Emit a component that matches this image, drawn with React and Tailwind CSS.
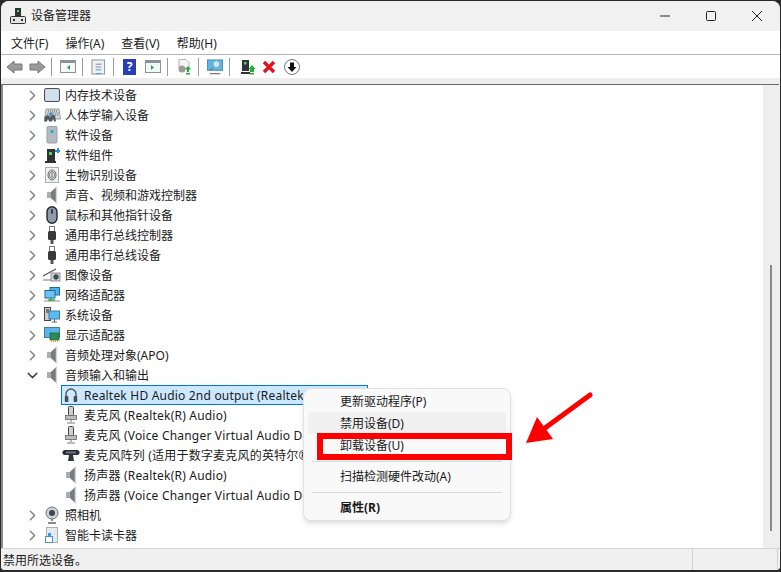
import { ChevronRight, ChevronDown } from 'lucide-react';

const FONT = "font-['Noto_Sans','Noto_Sans_CJK_SC',sans-serif]";

const Speaker = () => (
  <svg width="16" height="18" viewBox="0 0 16 18">
    <path d="M3 6h4l6-5.500v17L7 12H3z" fill="#a9adb0" />
    <path d="M7 6l6-5.500v17L7 12z" fill="#777c80" />
    <path d="M12.500 1v16" stroke="#d5d7d8" strokeWidth="1.500" />
  </svg>
);

const Usb = () => (
  <svg width="16" height="18" viewBox="0 0 16 18">
    <rect x="5.500" y="0.500" width="5" height="5" fill="#fff" stroke="#777" />
    <rect x="4" y="5" width="8" height="9" rx="1.500" fill="#3a3a3a" />
    <rect x="6.500" y="14" width="3" height="4" fill="#555" />
  </svg>
);

const Mic = () => (
  <svg width="16" height="18" viewBox="0 0 16 18">
    <rect x="5.500" y="0.500" width="5" height="9" rx="1" fill="#d0d0d0" stroke="#444" />
    <rect x="2.500" y="9.500" width="11" height="4" fill="#bdbdbd" stroke="#666" strokeWidth="0.800" />
    <path d="M8 13.500v2.500M4 17h8" stroke="#777" />
  </svg>
);

const iconMap = {
  memory: (
    <svg width="16" height="14" viewBox="0 0 16 14">
      <rect x="0.500" y="0.500" width="15" height="13" rx="1.500" fill="#c7d8e6" stroke="#4c5257" />
      <path d="M2 2h12v10H2z" fill="#d2e0ea" />
    </svg>
  ),
  hid: (
    <svg width="18" height="14" viewBox="0 0 18 14">
      <path d="M3 1h13l1.500 10H1.500z" fill="#d7dadd" stroke="#75797d" strokeWidth="0.700" />
      <path d="M5 3h10M4.500 5h11M4 7h12" stroke="#555" strokeDasharray="1 1" />
      <path d="M1 13.500l1-5q2-2 4-1l1 2 1-2q2-1 4 0l1 6h-2l-1-3-1 3H6l-1-3-1 3z" fill="#4f5860" />
      <circle cx="8" cy="6" r="1.800" fill="#3f8fd3" />
    </svg>
  ),
  soft: (
    <svg width="16" height="18" viewBox="0 0 16 18">
      <rect x="3" y="0.500" width="10" height="16.500" rx="1" fill="#b4bbc1" stroke="#9aa1a6" />
      <rect x="6.500" y="4" width="3" height="3" fill="#31a9c9" />
    </svg>
  ),
  comp: (
    <svg width="16" height="16" viewBox="0 0 16 16">
      <rect x="3" y="2" width="8" height="12" fill="#2f3336" />
      <rect x="5" y="5" width="3" height="3" fill="#4cd964" />
      <path d="M1 15h11" stroke="#2f3336" strokeWidth="2" />
      <path d="M11 3h2V1h2v2h1v2h-1v1h-2V5h-2z" fill="#2c8fdc" />
    </svg>
  ),
  bio: (
    <svg width="14" height="16" viewBox="0 0 14 16">
      <rect x="0.500" y="0.500" width="13" height="15" fill="#eef3ee" stroke="#a7b0aa" />
      <ellipse cx="7" cy="8" rx="4" ry="5" fill="none" stroke="#666" />
      <ellipse cx="7" cy="8" rx="2.500" ry="3.400" fill="none" stroke="#777" />
      <path d="M7 5.500v5" stroke="#666" />
    </svg>
  ),
  speaker: <Speaker />,
  mouse: (
    <svg width="12" height="18" viewBox="0 0 12 18">
      <rect x="1" y="0.700" width="10" height="16.600" rx="5" fill="#8f9ba6" stroke="#24282b" strokeWidth="1.400" />
      <rect x="5" y="3" width="2" height="5" rx="1" fill="#3b4046" />
    </svg>
  ),
  usb: <Usb />,
  image: (
    <svg width="18" height="14" viewBox="0 0 18 14">
      <path d="M0 8L13 1" stroke="#555" strokeWidth="1.200" />
      <path d="M0 11h8v2H0z" fill="#bbb" />
      <rect x="8" y="5" width="9" height="8" fill="#d7d7d7" stroke="#666" strokeWidth="0.700" />
      <circle cx="13" cy="9" r="2.400" fill="#3c5560" stroke="#222" strokeWidth="0.500" />
    </svg>
  ),
  net: (
    <svg width="16" height="16" viewBox="0 0 16 16">
      <rect x="6" y="0.500" width="9.500" height="7.500" fill="#4db2ea" stroke="#22689c" />
      <rect x="1" y="3.500" width="10" height="7.500" fill="#6cc2f0" stroke="#22689c" />
      <path d="M0 14h16" stroke="#c4c8ca" strokeWidth="2" />
      <path d="M7 11v3M4 13h7" stroke="#2fa84f" strokeWidth="1.500" />
    </svg>
  ),
  sys: (
    <svg width="16" height="16" viewBox="0 0 16 16">
      <rect x="0.500" y="0.500" width="6" height="13" fill="#c9cdd0" stroke="#444" />
      <path d="M2 3h3M2 5h3" stroke="#222" />
      <rect x="5" y="4" width="10.500" height="8" fill="#59bdf0" stroke="#3a7ca8" />
      <path d="M8 15h5M10.500 12v3" stroke="#666" />
    </svg>
  ),
  display: (
    <svg width="16" height="16" viewBox="0 0 16 16">
      <rect x="0.500" y="0.500" width="15" height="10" fill="#58b7ea" stroke="#4f7894" />
      <rect x="6" y="6" width="9" height="7" fill="#2f8a55" stroke="#1e5c39" strokeWidth="0.700" />
      <path d="M7 14h7" stroke="#d9a21d" strokeWidth="2" strokeDasharray="1 1" />
    </svg>
  ),
  camera: (
    <svg width="14" height="18" viewBox="0 0 14 18">
      <circle cx="7" cy="7" r="6" fill="#cfd2d4" stroke="#6f7478" />
      <circle cx="7" cy="7" r="3" fill="#3d474d" />
      <path d="M7 13v2M3 17h8" stroke="#666" strokeWidth="1.500" />
    </svg>
  ),
  card: (
    <svg width="14" height="16" viewBox="0 0 14 16">
      <rect x="1.500" y="0.500" width="11" height="15" fill="#e5ecef" stroke="#a8b0b5" />
      <rect x="0.500" y="9.500" width="7" height="6" fill="#fff" stroke="#4a93c9" />
      <rect x="3" y="6" width="3" height="3" fill="#2da0e0" />
    </svg>
  ),
  phones: (
    <svg width="14" height="16" viewBox="0 0 14 16">
      <path d="M2 11V7a5 5 0 0 1 10 0v4" fill="none" stroke="#555" strokeWidth="1.400" />
      <rect x="0.800" y="9" width="3.500" height="6" rx="1" fill="#4a4a4a" />
      <rect x="9.700" y="9" width="3.500" height="6" rx="1" fill="#4a4a4a" />
    </svg>
  ),
  mic: <Mic />,
  array: (
    <svg width="18" height="14" viewBox="0 0 18 14">
      <rect x="0.500" y="2" width="17" height="5" rx="2.500" fill="#252b30" />
      <rect x="4" y="3.500" width="10" height="2" fill="#6a7780" />
      <path d="M7 7h4l1 6H6z" fill="#30363a" />
    </svg>
  ),
};

const topRows = [
  ['memory', '内存技术设备'],
  ['hid', '人体学输入设备'],
  ['soft', '软件设备'],
  ['comp', '软件组件'],
  ['bio', '生物识别设备'],
  ['speaker', '声音、视频和游戏控制器'],
  ['mouse', '鼠标和其他指针设备'],
  ['usb', '通用串行总线控制器'],
  ['usb', '通用串行总线设备'],
  ['image', '图像设备'],
  ['net', '网络适配器'],
  ['sys', '系统设备'],
  ['display', '显示适配器'],
  ['speaker', '音频处理对象(APO)'],
];

const audioRows = [
  ['mic', '麦克风 (Realtek(R) Audio)'],
  ['mic', '麦克风 (Voice Changer Virtual Audio Device (WDM))'],
  ['array', '麦克风阵列 (适用于数字麦克风的英特尔® 智音技术)'],
  ['speaker', '扬声器 (Realtek(R) Audio)'],
  ['speaker', '扬声器 (Voice Changer Virtual Audio Device (WDM))'],
];

function Category({ icon, label, open }) {
  return (
    <div className="flex h-5 items-center whitespace-nowrap">
      <span className="ml-[15px] flex w-[24px] shrink-0 justify-end pr-px">
        {open ? (
          <ChevronDown size={17} strokeWidth={2} className="text-[#444]" />
        ) : (
          <ChevronRight size={17} strokeWidth={2} className="text-[#808080]" />
        )}
      </span>
      <span className="flex w-[20px] shrink-0 justify-center">{iconMap[icon]}</span>
      <span className="ml-[3px] pt-[2px] text-[12px] text-[#1a1a1a]">{label}</span>
    </div>
  );
}

function Device({ icon, label }) {
  return (
    <div className="flex h-5 items-center whitespace-nowrap pl-[58px]">
      <span className="flex w-[20px] shrink-0 justify-center">{iconMap[icon]}</span>
      <span className="ml-[3px] pt-[2px] text-[12px] tracking-[0.2px] text-[#1a1a1a]">{label}</span>
    </div>
  );
}

function MenuItem({ label, hover, bold }) {
  return (
    <div className={`mx-[4px] flex h-[22px] items-center rounded pl-[32px] pt-[2px] text-[12px] text-[#1a1a1a] ${bold ? 'font-bold' : ''} ${hover ? 'bg-[#f0f0f0]' : ''}`}>
      {label}
    </div>
  );
}

const ToolSep = ({ className }) => <span className={`h-[18px] w-px shrink-0 bg-[#999] ${className}`} />;

export default function App() {
  return (
    <div className={`${FONT} relative flex h-[572px] w-[781px] flex-col overflow-hidden bg-[#2a2a2a]`}>
      <div className="mb-[2px] ml-px mr-px mt-px flex flex-1 flex-col overflow-hidden rounded-b-sm rounded-t-lg bg-[#f0f0f0]">
        {/* title bar */}
        <div className="flex h-[30px] shrink-0 items-center bg-[#f1f1f1]">
          <svg width="16" height="18" viewBox="0 0 16 18" className="ml-[9px]">
            <rect x="5" y="1" width="6" height="8" fill="#2f3336" />
            <rect x="7" y="3" width="2" height="2" fill="#4cd964" />
            <rect x="0.500" y="9.500" width="15" height="7" rx="1" fill="#e3e3e3" stroke="#333" />
            <rect x="3" y="12" width="2" height="2" fill="#333" />
            <rect x="11" y="12" width="2" height="2" fill="#333" />
          </svg>
          <span className="ml-[5px] text-[12px] text-[#222]">设备管理器</span>
          <div className="ml-auto flex items-center">
            <svg width="46" height="30" viewBox="0 0 46 30"><path d="M18 15h10" stroke="#222" /></svg>
            <svg width="46" height="30" viewBox="0 0 46 30"><rect x="18.500" y="10.500" width="9" height="9" rx="1" fill="none" stroke="#222" /></svg>
            <svg width="46" height="30" viewBox="0 0 46 30"><path d="M18 10l10 10M28 10L18 20" stroke="#222" /></svg>
          </div>
        </div>

        {/* menu bar */}
        <div className="flex h-[24px] shrink-0 items-center gap-[17px] border-b border-[#b5b5b5] bg-white pl-[10px] pt-[2px] text-[12px] text-[#222]">
          <span>文件(F)</span>
          <span>操作(A)</span>
          <span>查看(V)</span>
          <span>帮助(H)</span>
        </div>

        {/* toolbar */}
        <div className="flex h-[23px] shrink-0 items-center bg-white pl-[5px]">
          <svg width="17" height="14" viewBox="0 0 17 14"><path d="M8 1L1 7l7 6V10h8V4H8z" fill="#9a9a9a" stroke="#777" /></svg>
          <svg width="17" height="14" viewBox="0 0 17 14" className="ml-[6px]"><path d="M9 1l7 6-7 6V10H1V4h8z" fill="#9a9a9a" stroke="#777" /></svg>
          <ToolSep className="ml-[5px]" />
          <svg width="16" height="14" viewBox="0 0 16 14" className="ml-[8px]">
            <rect x="0.500" y="0.500" width="15" height="12" fill="#f5f8fa" stroke="#8a9298" />
            <rect x="1" y="1" width="14" height="2" fill="#8a9298" />
            <path d="M10 5v5L7 7.500z" fill="#1ea44a" />
          </svg>
          <ToolSep className="ml-[6px]" />
          <svg width="15" height="16" viewBox="0 0 16 16" className="ml-[8px]">
            <rect x="1" y="0.500" width="13.500" height="15" fill="#eef0f2" stroke="#8a8f94" />
            <path d="M5 5h6M5 8h6M5 11h6" stroke="#6a8aa5" />
            <path d="M5 15h6" stroke="#2da0e0" />
          </svg>
          <ToolSep className="ml-[7px]" />
          <span className="ml-[9px] flex h-[16px] w-[13px] shrink-0 items-center justify-center bg-[#2a3fb5] text-[12px] font-bold leading-none text-white">?</span>
          <svg width="16" height="14" viewBox="0 0 16 14" className="ml-[9px]">
            <rect x="0.500" y="0.500" width="15" height="12" fill="#f5f8fa" stroke="#8a9298" />
            <rect x="1" y="1" width="14" height="2" fill="#8a9298" />
            <path d="M6 5v5l3-2.500z" fill="#1ea44a" />
          </svg>
          <ToolSep className="ml-[6px]" />
          <svg width="16" height="16" viewBox="0 0 16 16" className="ml-[8px]">
            <path d="M3 0.500h7l3 3v6H3z" fill="#f5f5f5" stroke="#b5b5b5" />
            <circle cx="6" cy="10" r="3.500" fill="#9a9a9a" />
            <path d="M12 7l3 3.500h-2V13h-2v-2.500H9z" fill="#1fae3a" />
            <path d="M10 14h4v1.500h-4z" fill="#1fae3a" />
          </svg>
          <ToolSep className="ml-[6px]" />
          <svg width="17" height="16" viewBox="0 0 18 16" className="ml-[8px]">
            <rect x="0.500" y="0.500" width="16" height="11" fill="#58b7ea" stroke="#4f8bb0" />
            <circle cx="10" cy="5" r="3.500" fill="#cfe8f5" stroke="#8aa" />
            <path d="M6 9l-3 3M3 15h11" stroke="#7a7a7a" strokeWidth="1.400" />
          </svg>
          <ToolSep className="ml-[5px]" />
          <svg width="16" height="16" viewBox="0 0 16 16" className="ml-[10px]">
            <rect x="2" y="1" width="7" height="11" fill="#2f3336" />
            <rect x="4" y="3" width="2.500" height="2.500" fill="#4cd964" />
            <path d="M1 14h9" stroke="#2f3336" strokeWidth="2" />
            <path d="M12 6l3.500 4H14v3h-4v-3H8.500z" fill="#1fae3a" />
            <path d="M10 14h4v1.500h-4z" fill="#1fae3a" />
          </svg>
          <svg width="14" height="14" viewBox="0 0 14 14" className="ml-[6px]">
            <path d="M2 2l10 10M12 2L2 12" stroke="#e0141c" strokeWidth="3.400" />
          </svg>
          <svg width="16" height="16" viewBox="0 0 16 16" className="ml-[8px]">
            <circle cx="8" cy="8" r="7.500" fill="#fff" stroke="#777" />
            <path d="M6 3.500h4V8h2.500L8 13 3.500 8H6z" fill="#111" />
          </svg>
        </div>

        {/* tree + scrollbar */}
        <div className="flex h-[470px] shrink-0 border-t-[6px] border-[#eeeeee] pr-px">
          <div className="flex flex-1 overflow-hidden border-l-2 border-t border-l-[#8a8a8a] border-t-[#6a6a6a]">
            <div className="min-w-0 flex-1 overflow-hidden bg-white">
              {topRows.map(([icon, label]) => <Category key={label} icon={icon} label={label} />)}
              <Category icon="speaker" label="音频输入和输出" open />
              <div className="ml-[58px] flex h-[20px] w-[307px] items-center overflow-hidden whitespace-nowrap border border-[#0078d7] bg-[#cce8ff]">
                <span className="flex w-[18px] shrink-0 justify-center">{iconMap.phones}</span>
                <span className="ml-[4px] pt-[2px] text-[12px] tracking-[0.2px] text-[#1a1a1a]">Realtek HD Audio 2nd output (Realtek(R) Audio)</span>
              </div>
              {audioRows.map(([icon, label]) => <Device key={label} icon={icon} label={label} />)}
              <Category icon="camera" label="照相机" />
              <Category icon="card" label="智能卡读卡器" />
            </div>
            <div className="relative w-[16px] shrink-0 bg-[#eeeeee]">
              <div className="absolute bottom-[17px] left-[7px] top-[180px] w-[2px] bg-[#8a8a8a]" />
            </div>
          </div>
        </div>

        {/* status bar */}
        <div className="flex flex-1 items-center border-t border-[#d5d5d5] bg-[#f0f0f0] pl-[2px] text-[12px] text-[#1a1a1a]">
          <span className="w-[689px] pt-[2px]">禁用所选设备。</span>
          <span className="h-full w-px bg-[#d0d0d0]" />
          <span className="ml-[84px] h-full w-px bg-[#d0d0d0]" />
        </div>
      </div>

      {/* context menu */}
      <div className="absolute left-[303px] top-[388px] w-[208px] rounded-lg border border-[#e2e2e2] bg-[#f9f9f9] pb-[2px] pt-px shadow-md">
        <MenuItem label="更新驱动程序(P)" />
        <MenuItem label="禁用设备(D)" hover />
        <MenuItem label="卸载设备(U)" />
        <div className="mx-[8px] mb-[3px] mt-[5px] h-px bg-[#d8d8d8]" />
        <MenuItem label="扫描检测硬件改动(A)" />
        <div className="mx-[8px] mb-[3px] mt-[5px] h-px bg-[#d8d8d8]" />
        <MenuItem label="属性(R)" bold />
      </div>

      {/* annotation */}
      <div className="absolute left-[317px] top-[433px] h-[27px] w-[195px] border-[6px] border-[#ff0000]" />
      <svg className="absolute left-[525px] top-[390px]" width="70" height="56" viewBox="0 0 70 56">
        <path d="M65 5L20 38" stroke="#ff0000" strokeWidth="5" strokeLinecap="round" />
        <path d="M1 53L12 27 28 49z" fill="#ff0000" />
      </svg>
    </div>
  );
}
